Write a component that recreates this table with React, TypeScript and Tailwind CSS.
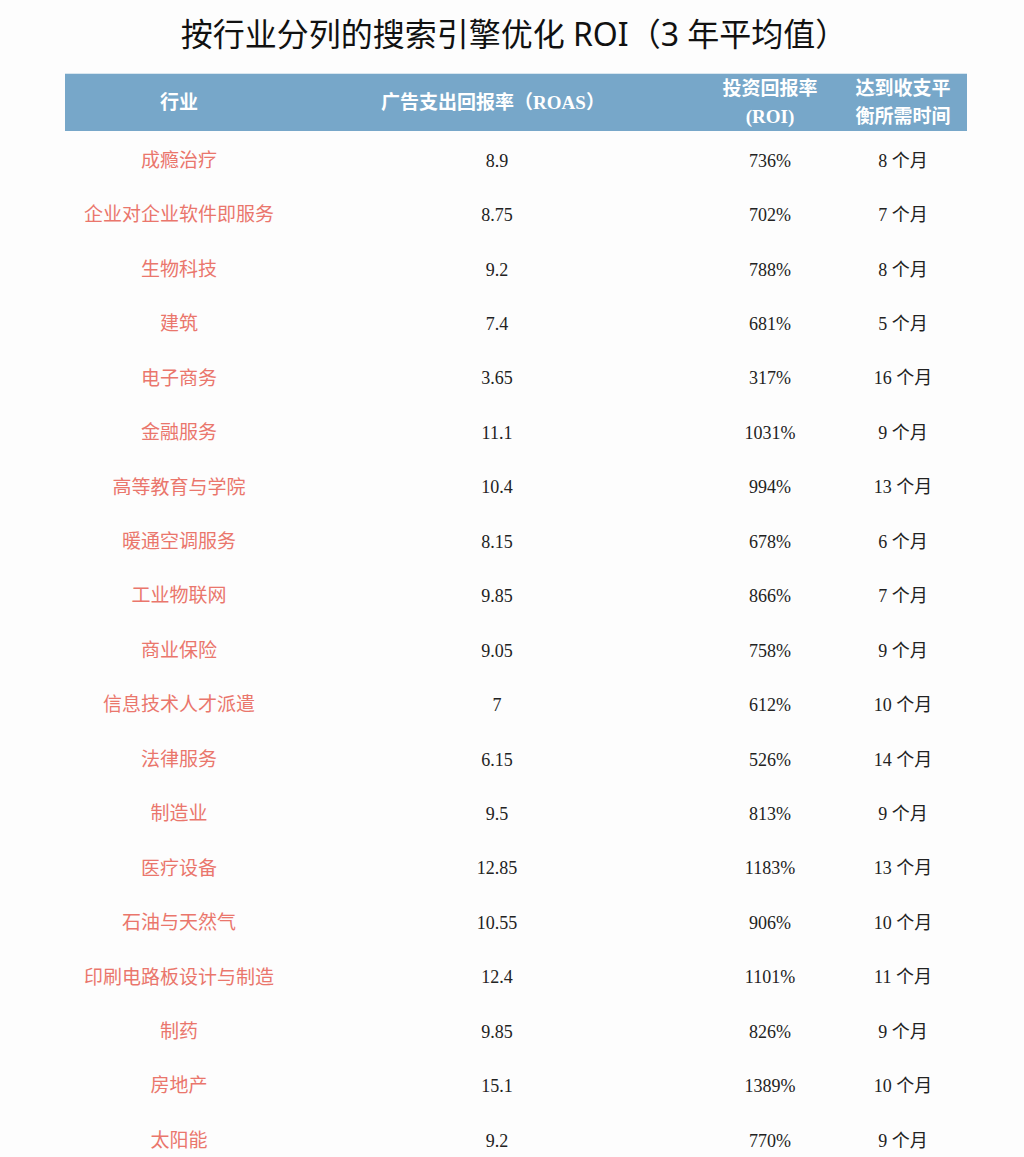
import React from "react";

const rows: [string, string, string, string][] = [
  ["成瘾治疗", "8.9", "736%", "8 个月"],
  ["企业对企业软件即服务", "8.75", "702%", "7 个月"],
  ["生物科技", "9.2", "788%", "8 个月"],
  ["建筑", "7.4", "681%", "5 个月"],
  ["电子商务", "3.65", "317%", "16 个月"],
  ["金融服务", "11.1", "1031%", "9 个月"],
  ["高等教育与学院", "10.4", "994%", "13 个月"],
  ["暖通空调服务", "8.15", "678%", "6 个月"],
  ["工业物联网", "9.85", "866%", "7 个月"],
  ["商业保险", "9.05", "758%", "9 个月"],
  ["信息技术人才派遣", "7", "612%", "10 个月"],
  ["法律服务", "6.15", "526%", "14 个月"],
  ["制造业", "9.5", "813%", "9 个月"],
  ["医疗设备", "12.85", "1183%", "13 个月"],
  ["石油与天然气", "10.55", "906%", "10 个月"],
  ["印刷电路板设计与制造", "12.4", "1101%", "11 个月"],
  ["制药", "9.85", "826%", "9 个月"],
  ["房地产", "15.1", "1389%", "10 个月"],
  ["太阳能", "9.2", "770%", "9 个月"],
];

const serif = "font-['Liberation_Serif','Noto_Sans_CJK_SC',serif]";

export default function App() {
  return (
    <div className="w-[1024px] h-[1157px] bg-[#fdfdfd] overflow-hidden">
      <div className="h-[73px] flex items-center justify-center pb-[6px] pl-[4px]">
        <h1 className="font-['Noto_Sans','Noto_Sans_CJK_SC',sans-serif] text-[32px] leading-[40px] text-[#111] font-normal">
          按行业分列的搜索引擎优化 ROI（3 年平均值）
        </h1>
      </div>
      <div className={`ml-[65px] w-[902px] ${serif}`}>
        <div className="grid grid-cols-[228px_408px_138px_128px] h-[58px] bg-[#77a7c9] border-t border-[#d8e6ef] text-white font-bold text-[19px] leading-[28px]">
          <div className="flex items-center justify-center">行业</div>
          <div className="flex items-center justify-center pr-[8px]">广告支出回报率（ROAS）</div>
          <div className="flex items-center justify-center text-center">
            <span>投资回报率<br />(ROI)</span>
          </div>
          <div className="flex items-center justify-center text-center">
            <span>达到收支平<br />衡所需时间</span>
          </div>
        </div>
        <div className="pt-[3px]">
          {rows.map((r, i) => (
            <div
              key={i}
              className="grid grid-cols-[228px_408px_138px_128px] h-[54.45px] items-center text-[18px] text-[#222]"
            >
              <div className="text-center text-[19px] text-[#ea766c]">{r[0]}</div>
              <div className="text-center">{r[1]}</div>
              <div className="text-center">{r[2]}</div>
              <div className="text-center">{r[3]}</div>
            </div>
          ))}
        </div>
      </div>
    </div>
  );
}
